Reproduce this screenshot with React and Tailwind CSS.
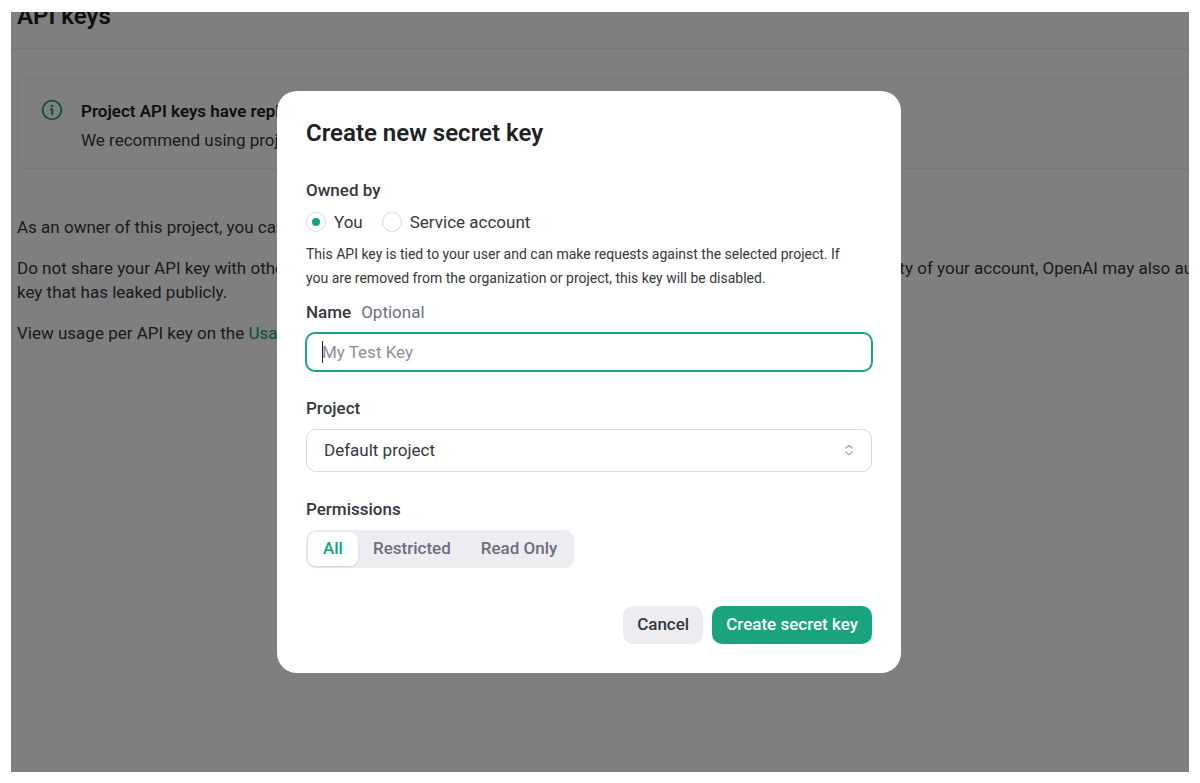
import { useState } from "react";

const permissions = ["All", "Restricted", "Read Only"];

const owners = [
  { id: "you", label: "You" },
  { id: "service", label: "Service account" },
];

function InfoIcon() {
  return (
    <svg width="22" height="22" viewBox="0 0 22 22" fill="none" className="mt-[2px] shrink-0 text-[#10a37f]">
      <circle cx="11" cy="11" r="9.3" stroke="currentColor" strokeWidth="1.8" />
      <circle cx="11" cy="7" r="1.3" fill="currentColor" />
      <path
        d="M9.8 10.3h1.4v4.9"
        stroke="currentColor"
        strokeWidth="2"
        strokeLinecap="round"
        strokeLinejoin="round"
      />
    </svg>
  );
}

function SelectIcon() {
  return (
    <svg
      width="10"
      height="12"
      viewBox="0 0 10 12"
      fill="none"
      className="pointer-events-none absolute top-[15px] right-[18px] text-[#a0a0a8]"
    >
      <path
        d="M1.8 4 5 1.4 8.2 4M1.8 8 5 10.6 8.2 8"
        stroke="currentColor"
        strokeWidth="1.2"
        strokeLinecap="round"
        strokeLinejoin="round"
      />
    </svg>
  );
}

function KeysPage() {
  return (
    <main className="text-[#353740]">
      {/* Header */}
      <header className="-mt-3 border-b border-[#ececf1] pb-4 pl-[6px]">
        <h1 className="text-2xl leading-8 font-semibold text-[#202123]">API keys</h1>
      </header>

      <div className="pl-[6px]">
        {/* Notice */}
        <div className="mt-[29px] -mr-4 flex gap-[18px] rounded-lg border border-[#ececf1] pt-[18px] pb-[13px] pl-[23px]">
          <InfoIcon />
          <div className="leading-[29px]">
            <p className="font-semibold text-[#202123]">
              Project API keys have replaced user API keys.
            </p>
            <p>We recommend using project based API keys.</p>
          </div>
        </div>

        {/* Description */}
        <div className="mt-[46px] space-y-[17px] leading-6 whitespace-nowrap">
          <p>As an owner of this project, you can view and manage all API keys.</p>
          <p>
            Do not share your API key with others, or expose it in a browser or other client-side
            code. In order to protect the security of your account, OpenAI may also automatically
            disable any API
            <br />
            key that has leaked publicly.
          </p>
          <p>
            View usage per API key on the{" "}
            <a href="#usage" className="text-[#10a37f]">
              Usage page
            </a>
            .
          </p>
        </div>
      </div>
    </main>
  );
}

function CreateKeyDialog() {
  const [owner, setOwner] = useState("you");
  const [name, setName] = useState("");
  const [permission, setPermission] = useState("All");

  return (
    <form
      role="dialog"
      aria-labelledby="dialog-title"
      onSubmit={(e) => e.preventDefault()}
      className="w-full max-w-[624px] rounded-[20px] bg-white px-[29px] pt-[26px] pb-[29px] text-[#353740]"
    >
      <h2 id="dialog-title" className="text-2xl leading-8 font-semibold text-[#202123]">
        Create new secret key
      </h2>

      {/* Owner */}
      <fieldset className="mt-[29px]">
        <legend className="leading-6 font-medium">Owned by</legend>
        <div className="mt-2 flex gap-[19px]">
          {owners.map((o) => (
            <label key={o.id} className="flex items-center gap-2 leading-6">
              <input
                type="radio"
                name="owner"
                checked={owner === o.id}
                onChange={() => setOwner(o.id)}
                className="grid size-5 appearance-none place-items-center rounded-full border border-[#d9d9e3] before:size-2 before:rounded-full checked:before:bg-[#10a37f]"
              />
              {o.label}
            </label>
          ))}
        </div>
      </fieldset>
      <p className="mt-2 max-w-[552px] text-sm leading-6">
        This API key is tied to your user and can make requests against the selected project. If
        you are removed from the organization or project, this key will be disabled.
      </p>

      {/* Name */}
      <label htmlFor="key-name" className="mt-[10px] flex gap-[10px] leading-6 font-medium">
        Name <span className="font-normal text-[#6e6e80]">Optional</span>
      </label>
      <div className="relative -mx-px mt-2">
        <input
          id="key-name"
          type="text"
          value={name}
          onChange={(e) => setName(e.target.value)}
          placeholder="My Test Key"
          className="block h-10 w-full rounded-[10px] border-2 border-[#1aa37f] px-[15px] outline-none placeholder:text-[#8e8ea0]"
        />
        <span className="absolute top-[9px] left-[17px] h-[22px] w-px bg-[#202123]" />
      </div>

      {/* Project */}
      <label htmlFor="project" className="mt-6 block leading-6 font-medium">
        Project
      </label>
      <div className="relative mt-[9px]">
        <select
          id="project"
          className="block h-[43px] w-full appearance-none rounded-[10px] border border-[#d9d9e3] bg-white px-[17px]"
        >
          <option>Default project</option>
        </select>
        <SelectIcon />
      </div>

      {/* Permissions */}
      <p className="mt-[25px] leading-6 font-medium">Permissions</p>
      <div className="mt-[9px] flex h-[38px] w-fit rounded-[10px] bg-[#ececf1] p-[2px] font-medium text-[#6e6e80]">
        {permissions.map((p) => (
          <button
            key={p}
            type="button"
            aria-pressed={permission === p}
            onClick={() => setPermission(p)}
            className="rounded-lg px-[15px] aria-pressed:bg-white aria-pressed:text-[#10a37f] aria-pressed:shadow-sm"
          >
            {p}
          </button>
        ))}
      </div>

      {/* Actions */}
      <div className="mt-[38px] flex h-[38px] justify-end gap-[9px] font-medium">
        <button type="button" className="rounded-[10px] bg-[#ececf1] px-[14px]">
          Cancel
        </button>
        <button type="submit" className="rounded-[10px] bg-[#1aa37f] px-[14px] text-white">
          Create secret key
        </button>
      </div>
    </form>
  );
}

export default function App() {
  return (
    <div className="h-screen bg-white px-[11px] pt-3 pb-[11px] font-['Roboto',sans-serif] text-[17px]">
      <div className="relative h-full overflow-hidden">
        <KeysPage />
        <div className="absolute inset-0 flex items-start justify-center bg-black/50 pt-[79px] pr-[22px]">
          <CreateKeyDialog />
        </div>
      </div>
    </div>
  );
}
